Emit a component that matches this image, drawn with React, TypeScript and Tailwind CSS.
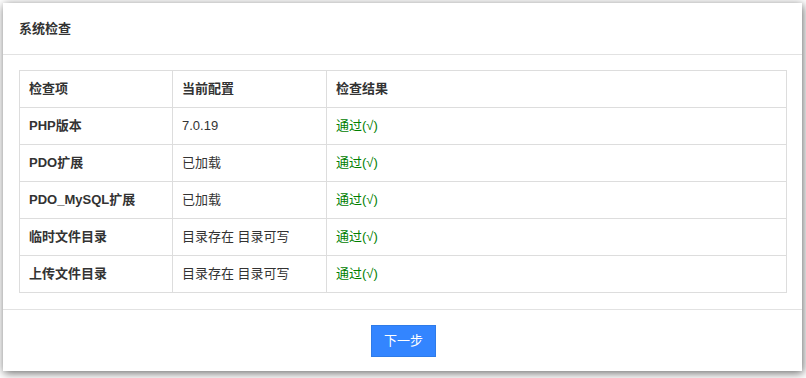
import React from 'react';

const rows = [
  { item: 'PHP版本', config: '7.0.19', result: '通过(√)' },
  { item: 'PDO扩展', config: '已加载', result: '通过(√)' },
  { item: 'PDO_MySQL扩展', config: '已加载', result: '通过(√)' },
  { item: '临时文件目录', config: '目录存在 目录可写', result: '通过(√)' },
  { item: '上传文件目录', config: '目录存在 目录可写', result: '通过(√)' },
];

const App: React.FC = () => {
  return (
    <div
      className="w-[806px] h-[378px] bg-white p-[3px] pr-[4px] text-[13px] text-[#333]"
      style={{ fontFamily: '"Liberation Sans", "Noto Sans CJK SC", sans-serif' }}
    >
      <div className="bg-white shadow-[1px_2px_9px_rgba(0,0,0,0.6)] h-[368px] flex flex-col">
        {/* Header */}
        <div className="h-[52px] flex items-center px-4 border-b border-[#e2e2e2] font-bold">
          系统检查
        </div>

        {/* Table */}
        <div className="pt-[15px] pl-4 pr-[15px] pb-4 border-b border-[#e2e2e2]">
          <table className="w-full border-collapse">
            <thead>
              <tr className="h-[37px]">
                <th className="w-[153px] border border-[#ddd] text-left font-bold pl-[9px]">检查项</th>
                <th className="w-[154px] border border-[#ddd] text-left font-bold pl-[9px]">当前配置</th>
                <th className="border border-[#ddd] text-left font-bold pl-[9px]">检查结果</th>
              </tr>
            </thead>
            <tbody>
              {rows.map((row) => (
                <tr key={row.item} className="h-[37px]">
                  <td className="border border-[#ddd] font-bold pl-[9px]">{row.item}</td>
                  <td className="border border-[#ddd] pl-[9px]">{row.config}</td>
                  <td className="border border-[#ddd] pl-[9px] text-[#008000]">{row.result}</td>
                </tr>
              ))}
            </tbody>
          </table>
        </div>

        {/* Footer */}
        <div className="flex justify-center pt-[15px] pl-[2px]">
          <button className="w-[65px] h-[32px] bg-[#3385ff] border border-[#2e7be8] text-white text-[13px]">
            下一步
          </button>
        </div>
      </div>
    </div>
  );
};

export default App;
